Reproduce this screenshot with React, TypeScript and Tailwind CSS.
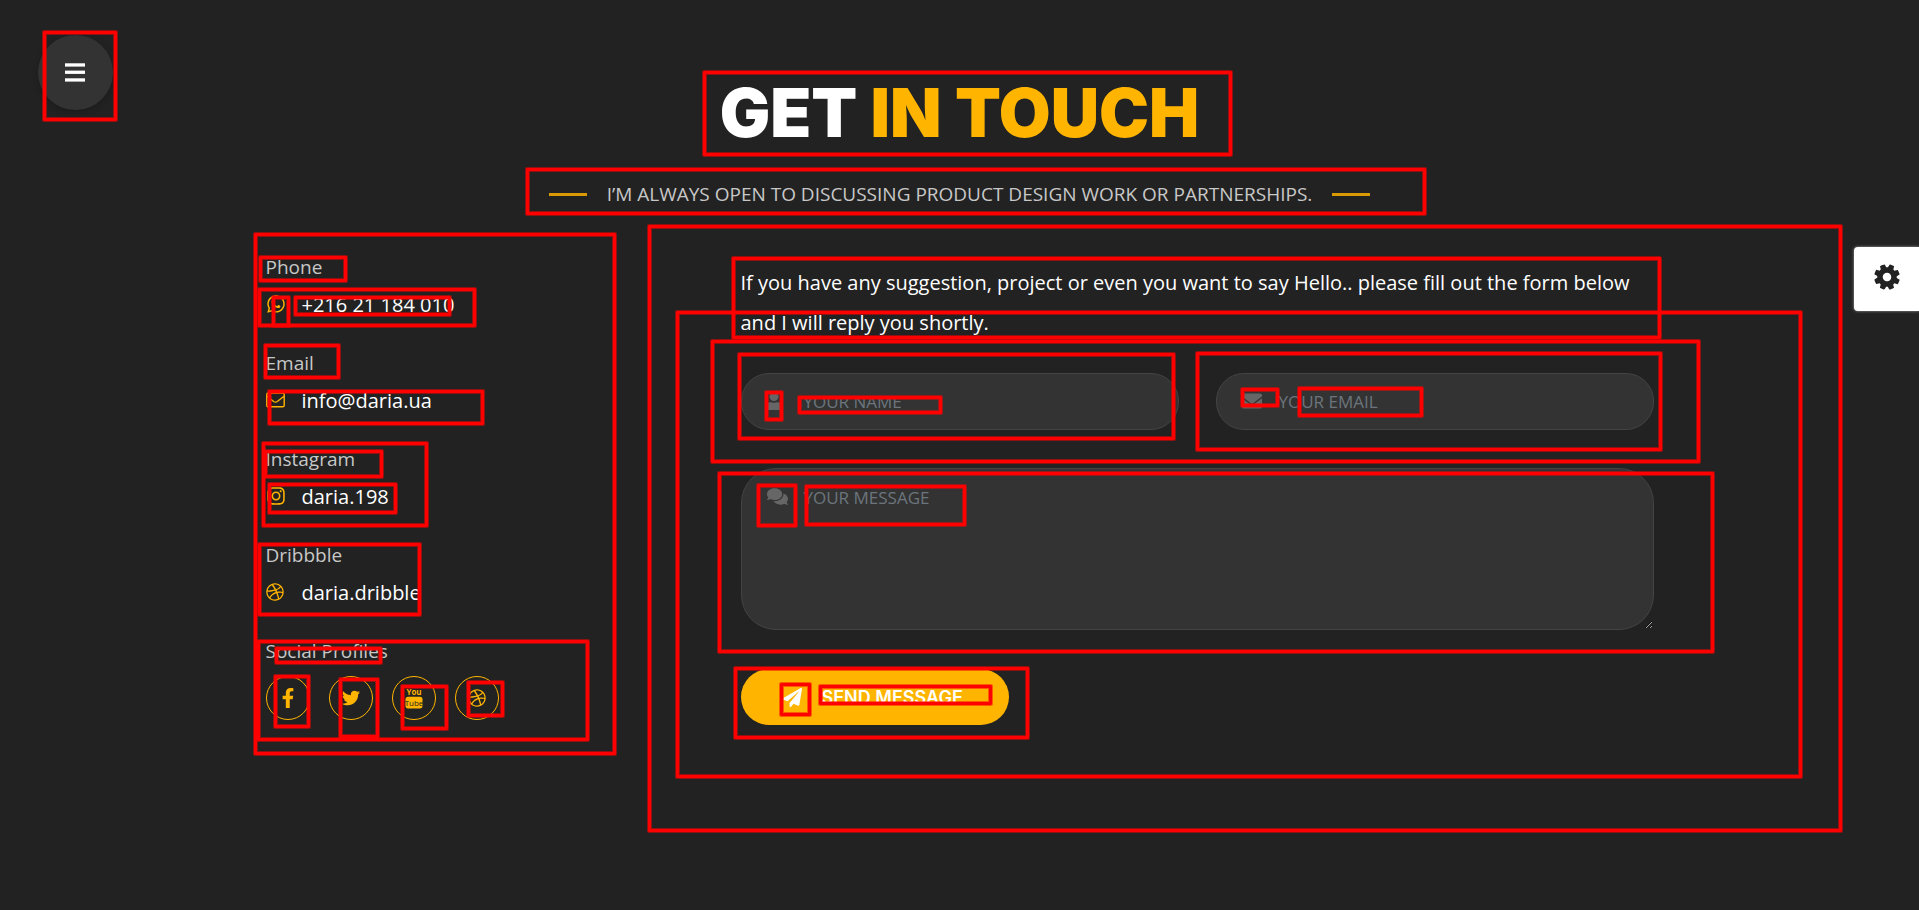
import { useState } from 'react';
import type { CSSProperties, ReactNode } from 'react';
import {
  FaFacebookF,
  FaDribbble,
  FaWhatsapp,
  FaInstagram,
  FaEnvelope,
  FaComments,
  FaPaperPlane,
  FaTwitter,
  FaUser,
} from 'react-icons/fa';

type Mark = [left: number, top: number, right: number, bottom: number];

const marks: Mark[] = [
  [43, 31, 117, 121],
  [703, 71, 1232, 156],
  [526, 168, 1426, 215],
  [254, 233, 616, 755],
  [648, 225, 1842, 832],
  [732, 257, 1661, 339],
  [259, 256, 347, 282],
  [258, 288, 476, 327],
  [272, 296, 290, 327],
  [294, 296, 451, 316],
  [264, 344, 340, 379],
  [268, 390, 484, 425],
  [262, 442, 428, 527],
  [264, 450, 383, 478],
  [268, 483, 397, 514],
  [258, 543, 421, 616],
  [257, 640, 589, 741],
  [275, 647, 382, 664],
  [274, 675, 310, 728],
  [339, 678, 379, 738],
  [401, 685, 448, 730],
  [467, 681, 504, 717],
  [676, 311, 1802, 778],
  [711, 340, 1700, 463],
  [738, 353, 1175, 440],
  [1196, 352, 1662, 451],
  [765, 391, 783, 421],
  [798, 396, 942, 414],
  [1241, 388, 1279, 407],
  [1298, 387, 1423, 417],
  [718, 472, 1714, 653],
  [757, 484, 797, 527],
  [805, 485, 966, 526],
  [734, 667, 1029, 739],
  [780, 683, 811, 716],
  [819, 685, 992, 705],
];

function markStyle([left, top, right, bottom]: Mark): CSSProperties {
  return { left, top, width: right - left, height: bottom - top };
}

function Marks() {
  return (
    <div aria-hidden="true" className="pointer-events-none absolute inset-0 z-20 overflow-hidden">
      {marks.map((mark) => (
        <div
          key={mark.join('-')}
          style={markStyle(mark)}
          className="absolute rounded-[1px] border-[3px] border-[#ff0000] shadow-[0_0_0_1px_rgba(255,0,0,0.5),inset_0_0_0_1px_rgba(255,0,0,0.5)]"
        />
      ))}
    </div>
  );
}

function GearIcon() {
  return (
    <svg width="26" height="30" viewBox="0 0 1536 1792" fill="currentColor" className="overflow-visible">
      <path
        transform="rotate(23 768 896)"
        d="M1024 896q0-106-75-181t-181-75-181 75-75 181 75 181 181 75 181-75 75-181zm512-109v222q0 12-8 23t-20 13l-185 28q-19 54-39 91 35 50 107 138 10 12 10 25t-9 23q-27 37-99 108t-94 71q-12 0-26-9l-138-108q-44 23-91 38-16 136-29 186-7 28-36 28h-222q-14 0-24.500-8.500t-11.500-21.500l-28-184q-49-16-90-37l-141 107q-10 9-25 9-14 0-25-11-126-114-165-168-7-10-7-23 0-12 8-23 15-21 51-66.500t54-70.500q-27-50-41-99l-183-27q-13-2-21-12.500t-8-23.500v-222q0-12 8-23t19-13l186-28q14-46 39-92-40-57-107-138-10-12-10-24 0-10 9-23 26-36 98.500-107.500t94.500-71.500q13 0 26 10l138 107q44-23 91-38 16-136 29-186 7-28 36-28h222q14 0 24.500 8.500t11.500 21.500l28 184q49 16 90 37l142-107q9-9 24-9 13 0 25 10 129 119 165 170 7 8 7 22 0 12-8 23-15 21-51 66.500t-54 70.500q26 50 41 98l183 28q13 2 21 12.500t8 23.500z"
      />
    </svg>
  );
}

function EnvelopeIcon() {
  return (
    <svg width="19" height="16" viewBox="0 0 19 16" fill="none" stroke="currentColor" strokeWidth="1.4">
      <rect x="0.8" y="1" width="17.4" height="13.8" rx="1.4" />
      <path d="M1 4.2 7.700 9.500q1.800 1.300 3.600 0L18 4.200" />
    </svg>
  );
}

function YoutubeIcon() {
  return (
    <svg width="18" height="22" viewBox="0 0 18 22" fill="currentColor">
      <rect x="0.5" y="9.800" width="17" height="11.600" rx="2.600" />
      <text
        x="9"
        y="8"
        textAnchor="middle"
        className="font-['Liberation_Sans_Narrow','Open_Sans',sans-serif] text-[8px] font-bold"
      >
        You
      </text>
      <text
        x="9"
        y="18.500"
        textAnchor="middle"
        fill="#222"
        className="font-['Liberation_Sans_Narrow','Open_Sans',sans-serif] text-[8px]"
      >
        Tube
      </text>
    </svg>
  );
}

function Contact({ label, icon, children }: { label: string; icon: ReactNode; children: ReactNode }) {
  return (
    <div className="mb-[27px]">
      <dt className="text-[19px] leading-[30px] text-[#c8c8c8]">{label}</dt>
      <dd className="mt-[7px] flex h-[32px] items-center text-[20px] leading-[32px] text-white">
        <span className="flex w-[36px] pb-[2px] text-[#ffb400]">{icon}</span>
        <span>{children}</span>
      </dd>
    </div>
  );
}

function Social({ label, children }: { label: string; children: ReactNode }) {
  return (
    <a
      href="#"
      aria-label={label}
      className="flex size-[44px] items-center justify-center rounded-full border border-[#ffb400] text-[#ffb400]"
    >
      {children}
    </a>
  );
}

const field =
  'w-full border border-[#444] bg-[#333] pl-[62px] pr-6 text-[17px] text-white placeholder:text-[#6c757d] outline-none focus:border-[#ffb400]';

export default function App() {
  const [menuOpen, setMenuOpen] = useState(false);

  return (
    <div className="relative min-h-screen bg-[#222] font-['Open_Sans','Noto_Sans',sans-serif]">
      <button
        type="button"
        aria-label="Menu"
        aria-expanded={menuOpen}
        onClick={() => setMenuOpen(!menuOpen)}
        className="absolute left-[38px] top-[35px] z-10 flex size-[75px] items-center justify-center rounded-full bg-[#333] pr-[2px] text-white shadow-[0_2px_6px_rgba(0,0,0,0.2)]"
      >
        <svg width="20" height="20" viewBox="0 0 20 20" fill="currentColor">
          <rect y="0.3" width="20" height="3.3" />
          <rect y="7.6" width="20" height="3.3" />
          <rect y="15.3" width="20" height="3.3" />
        </svg>
      </button>

      <button
        type="button"
        aria-label="Settings"
        className="absolute right-0 top-[247px] z-10 flex h-[64px] w-[65px] items-center justify-center rounded-l-[4px] bg-white pb-[4px] text-[#222] shadow-[0_0_3px_rgba(255,255,255,0.6)]"
      >
        <GearIcon />
      </button>

      <header className="flex flex-col items-center pt-[73px] text-center">
        <h1 className="font-['Inter',sans-serif] text-[67px] font-black leading-[80px] text-white">
          GET <span className="text-[#ffb400]">IN TOUCH</span>
        </h1>
        <div className="mt-[23px] flex items-center gap-[20px] text-[19px] leading-[36px] text-[#c8c8c8]">
          <span className="h-[3px] w-[38px] bg-[#d99a04]" />
          <p>I’M ALWAYS OPEN TO DISCUSSING PRODUCT DESIGN WORK OR PARTNERSHIPS.</p>
          <span className="h-[3px] w-[38px] bg-[#d99a04]" />
        </div>
      </header>

      <main className="mx-auto flex max-w-[1388px] pt-[40px]">
        <aside className="w-[475px] shrink-0">
          <dl>
            <Contact label="Phone" icon={<FaWhatsapp size={20} />}>
              +216 21 184 010
            </Contact>
            <Contact label="Email" icon={<EnvelopeIcon />}>
              info@daria.ua
            </Contact>
            <Contact label="Instagram" icon={<FaInstagram size={20} />}>
              daria.198
            </Contact>
            <Contact label="Dribbble" icon={<FaDribbble size={18} />}>
              daria.dribble
            </Contact>
          </dl>
          <h2 className="text-[19px] leading-[30px] text-[#c8c8c8]">Social Profiles</h2>
          <div className="mt-[10px] flex gap-[19px]">
            <Social label="Facebook">
              <FaFacebookF size={20} />
            </Social>
            <Social label="Twitter">
              <FaTwitter size={18} />
            </Social>
            <Social label="YouTube">
              <YoutubeIcon />
            </Social>
            <Social label="Dribbble">
              <FaDribbble size={18} />
            </Social>
          </div>
        </aside>

        <section className="min-w-0 flex-1 pt-[11px]">
          <p className="text-[20px] leading-[40px] text-white">
            If you have any suggestion, project or even you want to say Hello.. please fill out the form below and I
            will reply you shortly.
          </p>
          <form className="mt-[30px]" onSubmit={(event) => event.preventDefault()}>
            <div className="grid grid-cols-2 gap-[37px]">
              <label className="relative block">
                <FaUser size={18} className="absolute left-[24px] top-[19px] text-[#666]" />
                <input
                  type="text"
                  aria-label="Your name"
                  placeholder="YOUR NAME"
                  className={`${field} h-[57px] rounded-[28px]`}
                />
              </label>
              <label className="relative block">
                <FaEnvelope size={20} className="absolute left-[26px] top-[18px] text-[#666]" />
                <input
                  type="email"
                  aria-label="Your email"
                  placeholder="YOUR EMAIL"
                  className={`${field} h-[57px] rounded-[28px]`}
                />
              </label>
            </div>
            <label className="relative mt-[38px] block">
              <FaComments size={21} className="absolute left-[26px] top-[18px] text-[#666]" />
              <textarea
                aria-label="Your message"
                placeholder="YOUR MESSAGE"
                className={`${field} block h-[162px] rounded-[35px] py-[16px]`}
              />
            </label>
            <button
              type="submit"
              className="mt-[39px] flex h-[56px] w-[268px] items-center gap-[20px] rounded-[28px] bg-[#ffb400] pl-[42px] font-['Inter',sans-serif] text-[18px] font-semibold text-white"
            >
              <FaPaperPlane size={19} />
              SEND MESSAGE
            </button>
          </form>
        </section>
      </main>

      <Marks />
    </div>
  );
}
